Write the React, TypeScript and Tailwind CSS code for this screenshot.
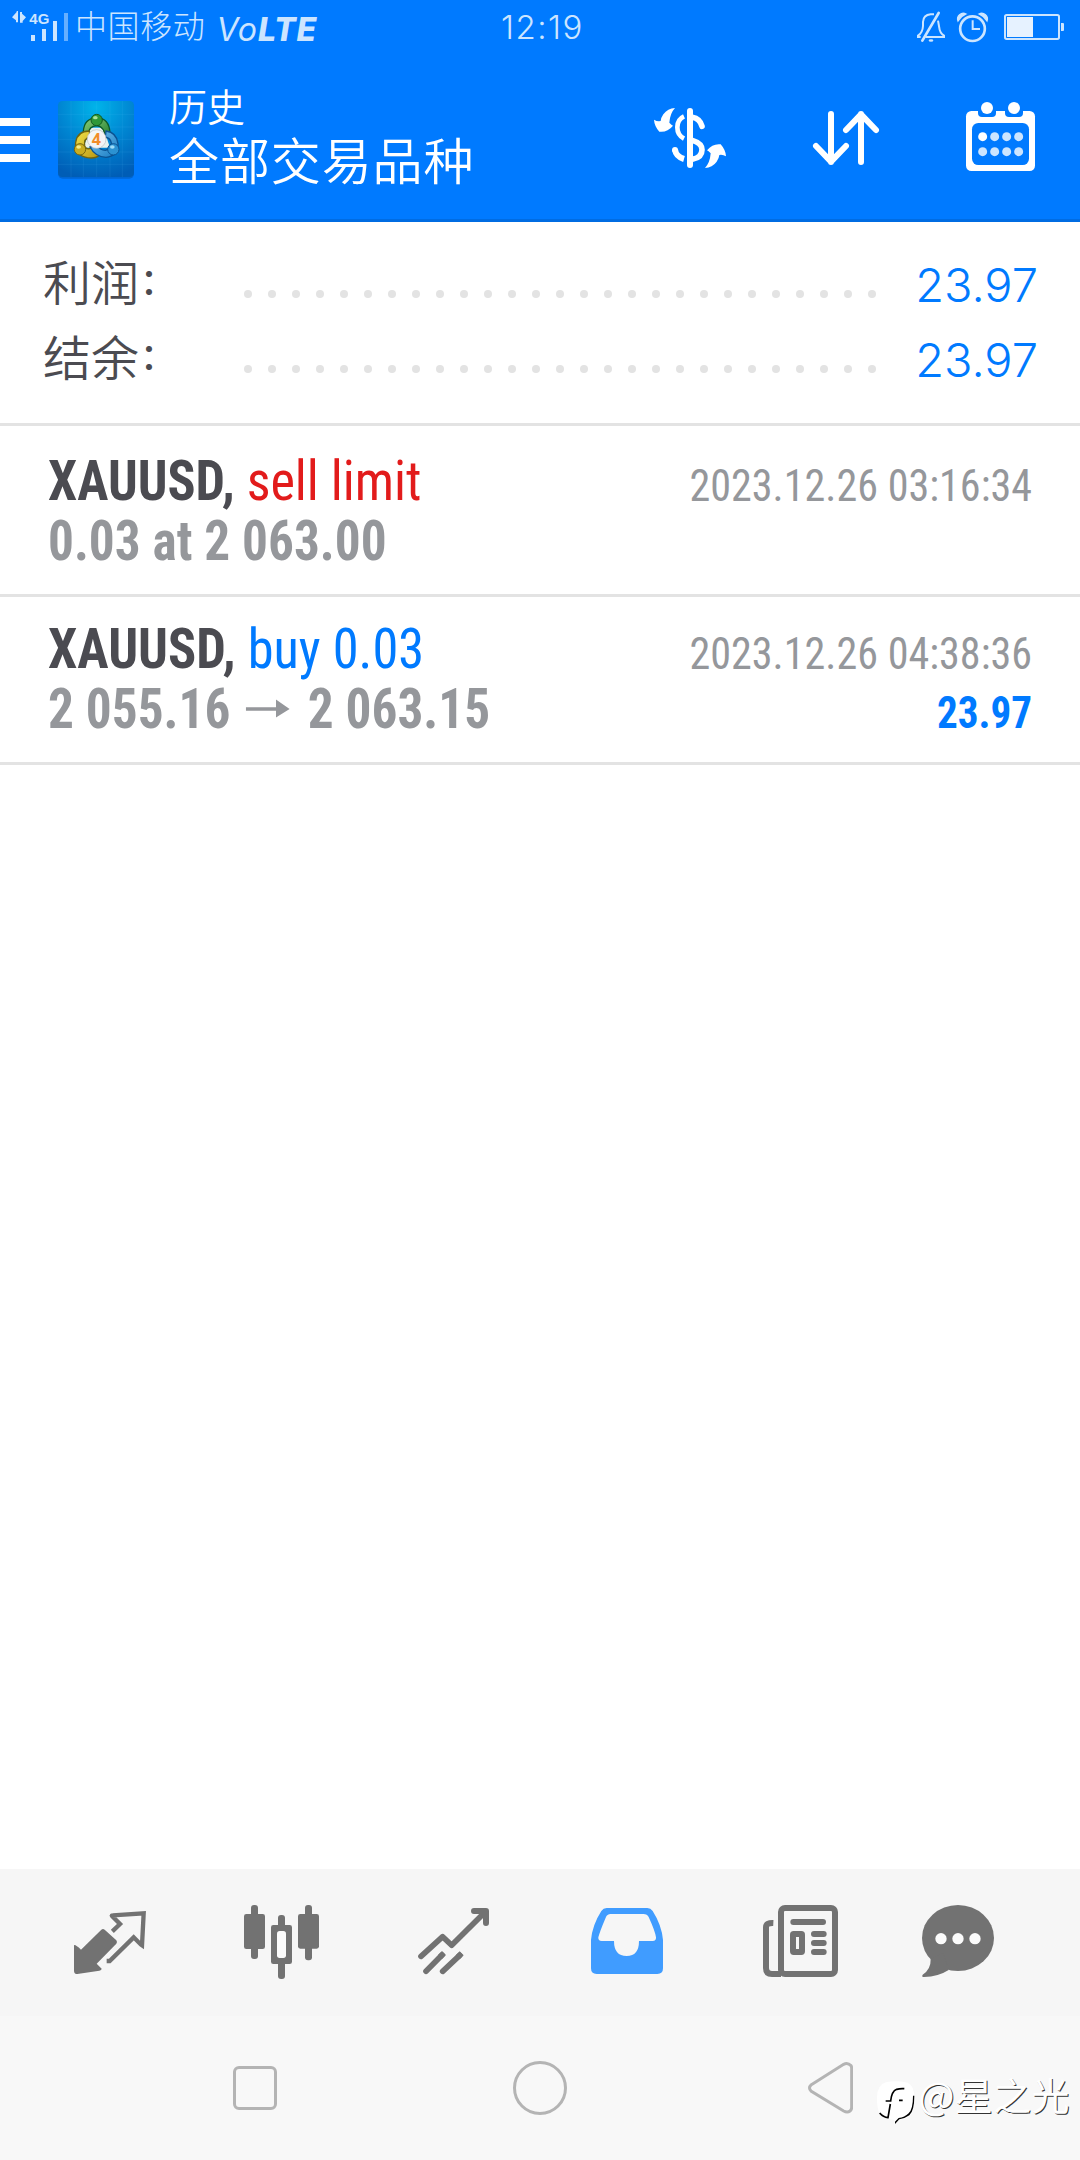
import React from 'react'

function SignalIcon() {
  return (
    <svg className="h-[38px] w-[64px] shrink-0" viewBox="24 24 192 114" fill="#cce5ff">
      <path d="M36 52 L50 36 V33 H54 V67 H48 V61 Z M60 36 H66 V41 L78 52 L68 63 V68 H60 Z" />
      <text x="88" y="72" fontSize="45" fontWeight="700" fontFamily="Liberation Sans, sans-serif" textLength="60">4G</text>
      <rect x="93" y="105" width="12" height="18" />
      <rect x="126" y="87" width="12" height="36" />
      <rect x="159" y="63" width="12" height="60" />
      <rect x="192" y="39" width="12" height="84" fill="#66afff" />
    </svg>
  )
}

function StatusIcons() {
  return (
    <svg className="h-[38px] w-[152px] shrink-0" viewBox="72 24 456 114" fill="none" stroke="#cce5ff">
      <path d="M132 43 H122 Q100 45 99 66 V78 Q98 98 84 107 V111 H92" strokeWidth="6" />
      <path d="M106 111 H162 V107 Q149 98 148 84 L144 62" strokeWidth="6" />
      <path d="M97 122 L146 39" strokeWidth="8" strokeLinecap="round" />
      <ellipse cx="123" cy="121.500" rx="7" ry="4" fill="#cce5ff" stroke="none" />
      <circle cx="247.500" cy="86" r="37" strokeWidth="8" />
      <path d="M248 61 V87 H270" strokeWidth="6" />
      <path d="M204 63 A17 17 0 0 1 228 42 Q212 49 204 63 Z M291 63 A17 17 0 0 0 267 42 Q283 49 291 63 Z" fill="#cce5ff" strokeWidth="4" />
      <rect x="345" y="45" width="162" height="72" rx="5" strokeWidth="6" />
      <rect x="351" y="51" width="78" height="60" fill="#e6f2ff" stroke="none" />
      <path d="M513 69 H519 Q522 69 522 72 V90 Q522 93 519 93 H513 Z" fill="#cce5ff" stroke="none" />
    </svg>
  )
}

function AppLogo() {
  return (
    <svg className="h-[84px] w-[84px] shrink-0" viewBox="162 288 252 252">
      <defs>
        <radialGradient id="tile" cx="0.5" cy="0.08" r="0.95">
          <stop offset="0" stopColor="#00b4ea" />
          <stop offset="0.5" stopColor="#0086d2" />
          <stop offset="1" stopColor="#005db6" />
        </radialGradient>
        <linearGradient id="green" x1="0" y1="0" x2="1" y2="1">
          <stop offset="0" stopColor="#8fd07a" />
          <stop offset="1" stopColor="#1c7a2c" />
        </linearGradient>
        <linearGradient id="gold" x1="0" y1="0" x2="1" y2="1">
          <stop offset="0" stopColor="#f2e34a" />
          <stop offset="1" stopColor="#b99612" />
        </linearGradient>
        <linearGradient id="azure" x1="0" y1="0" x2="1" y2="1">
          <stop offset="0" stopColor="#7cc6ee" />
          <stop offset="1" stopColor="#1479c2" />
        </linearGradient>
      </defs>
      <rect x="174" y="304" width="228" height="229" rx="14" fill="#0059b8" opacity="0.6" />
      <rect x="174" y="300" width="228" height="228" rx="13" fill="url(#tile)" />
      <path d="M213 300 V528 M250 300 V528 M290 300 V528 M330 300 V528 M367 300 V528 M174 340 H402 M174 378 H402 M174 415 H402 M174 453 H402 M174 490 H402" stroke="#5cc8ff" strokeOpacity="0.16" strokeWidth="2" />
      <path d="M272 380 H310 L330 440 H250 Z" fill="#e8f2ee" />
      <path d="M250 392 Q252 352 290 350 Q328 352 330 396 L316 412 Q314 376 290 374 Q266 376 266 398 Z" fill="url(#green)" stroke="#0c5a2a" strokeWidth="4" />
      <path d="M268 390 Q232 390 227 424 Q222 462 262 470 Q288 474 298 462 L284 434 Q262 452 254 436 Q250 412 270 408 Z" fill="url(#gold)" stroke="#6f6410" strokeWidth="4" />
      <path d="M318 390 Q350 394 354 428 Q356 464 318 469 Q286 468 270 438 L290 432 Q300 448 316 448 Q334 444 334 426 Q332 412 316 408 Z" fill="url(#azure)" stroke="#0b5292" strokeWidth="4" />
      <circle cx="290" cy="357" r="17" fill="#2e9838" stroke="#145c22" strokeWidth="3" />
      <circle cx="240" cy="445" r="17" fill="#c9ad20" stroke="#75660f" strokeWidth="3" />
      <circle cx="340" cy="445" r="17" fill="#2b92d2" stroke="#0b5292" strokeWidth="3" />
      <ellipse cx="286" cy="350" rx="7" ry="5" fill="#a9e29b" />
      <ellipse cx="236" cy="438" rx="7" ry="5" fill="#f5ec8a" />
      <ellipse cx="337" cy="438" rx="7" ry="5" fill="#9fdcf8" />
      <circle cx="290" cy="414" r="28" fill="#f3f4f6" stroke="#b9c0c6" strokeWidth="2" />
      <text x="289" y="431" fontSize="48" fontWeight="700" textAnchor="middle" fill="#f28c28" fontFamily="Open Sans, sans-serif">4</text>
    </svg>
  )
}

const swapArrow =
  'M165 84 Q143 85 130 103 Q123 113 122 123 Q112 125 102 119 Q103 138 118 155 Q142 158 159 137 Q155 135 148 128 Q150 100 165 84 Z'

function DollarIcon() {
  return (
    <svg className="h-[96px] w-[100px]" viewBox="60 36 300 288" fill="none" stroke="#fff">
      <path d={swapArrow} fill="#fff" stroke="none" />
      <path d={swapArrow} fill="#fff" stroke="none" transform="rotate(180 210 174)" />
      <path d="M210 93 V255" strokeWidth="18" strokeLinecap="round" />
      <path d="M192 109 Q172 118 172 142 Q172 166 192 176" strokeWidth="14" />
      <path d="M217 112 Q240 116 246 139" strokeWidth="17" strokeLinecap="round" />
      <path d="M217 181 Q246 190 246 209 Q246 232 217 238" strokeWidth="17" />
      <path d="M165 209 Q168 230 192 237" strokeWidth="18" />
      <circle cx="165" cy="210" r="9" fill="#fff" stroke="none" />
    </svg>
  )
}

function SortIcon() {
  return (
    <svg className="h-[96px] w-[90px]" viewBox="540 36 270 288" fill="none" stroke="#fff" strokeWidth="18" strokeLinecap="round" strokeLinejoin="round">
      <path d="M633 102 V246 M588 198 L633 245 L678 198" />
      <path d="M723 246 V102 M678 150 L723 103 L768 150" />
    </svg>
  )
}

function CalendarIcon() {
  return (
    <svg className="h-[96px] w-[100px]" viewBox="990 36 300 288" fill="#fff">
      <rect x="1038" y="93" width="207" height="180" rx="16" />
      <rect x="1056" y="129" width="171" height="126" rx="19" fill="#007aff" />
      <rect x="1074" y="80" width="54" height="31" rx="12" fill="#007aff" />
      <rect x="1155" y="80" width="54" height="31" rx="12" fill="#007aff" />
      <circle cx="1101" cy="84" r="18" />
      <circle cx="1182" cy="84" r="18" />
      {[170, 215].map((y) =>
        [1088, 1124, 1160, 1196].map((x) => (
          <circle key={`${x}-${y}`} cx={x} cy={y} r="13.500" fill={x === 1088 && y === 170 ? '#fff' : '#cce5ff'} />
        )),
      )}
    </svg>
  )
}

function SummaryRow({ label, value }: { label: string; value: string }) {
  return (
    <div className="flex h-[75px] items-center">
      <span className="mb-[10px] flex w-[201px] items-center text-[48px] leading-none whitespace-nowrap text-[#4b4b51] font-['Noto_Sans_CJK_SC',sans-serif] [font-weight:350]">
        {label}
        <span className="-mt-[2px] ml-[1px] text-[36px] font-medium">：</span>
      </span>
      <div className="mt-[18px] flex gap-4">
        {Array.from({ length: 27 }, (_, i) => (
          <span key={i} className="size-2 rounded-full bg-[#e3e3e3]" />
        ))}
      </div>
      <span className="mb-px ml-auto font-['Inter',sans-serif] text-[47px] leading-none font-light text-[#007aff]">{value}</span>
    </div>
  )
}

function PriceArrow() {
  return (
    <svg className="h-[20px] w-[48px]" viewBox="0 0 46 20" preserveAspectRatio="none" fill="#95979b">
      <path d="M0 8.200 H31 V0.500 L45 10 L31 18.500 V11.800 H0 Z" />
    </svg>
  )
}

function TradeIcon() {
  return (
    <svg className="mr-[70px] h-[90px] w-[100px]" viewBox="60 108 300 270" fill="#727272">
      <path d="M102 256 Q105 252 123 269 L184 209 Q189 205 194 209 L229 241 Q233 246 229 251 L170 311 L185 326 Q185 331 178 332 L112 342 Q102 342 102 332 Z" />
      <path d="M217 214 L240 192 L216 168 Q214 166 218 166 L311 160 L306 256 L303 254 L281 232 L209 303 H200" fill="none" stroke="#727272" strokeWidth="13" />
    </svg>
  )
}

function CandlesIcon() {
  return (
    <svg className="mr-[75px] h-[90px] w-[100px]" viewBox="570 108 300 270" fill="#727272">
      <rect x="633" y="135" width="21" height="162" rx="9" />
      <rect x="612" y="162" width="63" height="105" rx="7" />
      <rect x="795" y="135" width="21" height="166" rx="9" />
      <rect x="774" y="162" width="63" height="104" rx="7" />
      <rect x="714" y="165" width="21" height="192" rx="9" />
      <rect x="693" y="195" width="63" height="117" rx="7" />
      <rect x="711" y="213" width="27" height="81" rx="8" fill="#fbfbfb" />
    </svg>
  )
}

function TrendIcon() {
  return (
    <svg className="mr-[75px] h-[90px] w-[100px]" viewBox="1095 108 300 270" fill="none" stroke="#727272" strokeWidth="17" strokeLinecap="round" strokeLinejoin="round">
      <path d="M1143 289 L1208 230 L1235 256 L1336 155" />
      <path d="M1302 153 H1338 V189" strokeWidth="18" />
      <path d="M1158 334 L1206 285 M1208 334 L1259 286" />
      <path d="M1200 291 L1212 279 M1253 292 L1265 280" strokeLinecap="butt" />
    </svg>
  )
}

function InboxIcon() {
  return (
    <svg className="mr-[70px] h-[90px] w-[100px]" viewBox="60 108 300 270" fill="#409cff">
      <path
        fillRule="evenodd"
        d="M93 240 Q97 195 124 153 Q130 144 140 144 H262 Q272 144 278 153 Q305 195 309 240 V325 Q309 342 292 342 H110 Q93 342 93 325 Z M152 162 H250 Q262 162 266 171 Q286 215 288 232 Q289 243 278 243 H237 Q237 288 200 288 Q162 288 162 243 H125 Q114 243 115 232 Q118 218 137 173 Q141 162 152 162 Z"
      />
    </svg>
  )
}

function NewsIcon() {
  return (
    <svg className="mr-[60px] h-[90px] w-[100px]" viewBox="570 108 300 270" fill="none" stroke="#727272" strokeWidth="18">
      <rect x="663" y="144" width="162" height="198" rx="12" />
      <path d="M640 189 Q618 188 618 202 V324 Q618 342 636 342 H663" />
      <rect x="699" y="222" width="27" height="54" rx="2" />
      <path d="M700 186 H789 M762 222 H791 M762 249 H791 M762 276 H791" strokeLinecap="round" />
    </svg>
  )
}

function ChatIcon() {
  return (
    <svg className="h-[90px] w-[100px]" viewBox="1050 108 300 270" fill="#727272">
      <ellipse cx="1194" cy="234" rx="108" ry="99" />
      <path d="M1112 297 Q1113 328 1088 344 Q1084 351 1092 351 Q1135 350 1166 330 L1150 280 Z" />
      <g fill="#fbfbfb">
        <circle cx="1143" cy="236" r="17" />
        <circle cx="1194" cy="236" r="17" />
        <circle cx="1245" cy="236" r="17" />
      </g>
    </svg>
  )
}

function Watermark() {
  return (
    <div className="absolute right-[10px] bottom-[43px] flex items-center gap-[2px]">
      <svg className="h-[46px] w-[40px] translate-y-[9px]" viewBox="290 148 120 138">
        <path d="M320 155 Q350 148 385 156 Q404 164 405 200 Q406 240 392 256 Q378 266 362 267 L346 281 V267 Q316 266 303 252 Q292 236 293 200 Q294 162 320 155 Z" fill="#fff" />
        <path d="M405 195 Q405 240 390 254 Q376 264 360 266 L347 280 V273 L358 262 Q376 260 388 248 Q401 235 401 195 Z" fill="#000" />
        <path d="M301 247 Q312 260 326 261 L333 220 M319 211 H334 Q337 182 352 176 Q362 173 375 174 M359 209 H370" fill="none" stroke="#000" strokeWidth="5" />
      </svg>
      <span className="text-[38px] leading-none tracking-[0.4px] whitespace-nowrap text-white font-['Noto_Sans_CJK_SC',sans-serif] [text-shadow:1px_1px_0_#333]">@星之光</span>
    </div>
  )
}

export default function App() {
  return (
    <div className="flex h-[2160px] w-[1080px] flex-col overflow-hidden bg-white">
      <header className="h-[222px] shrink-0 border-b-[3px] border-[#006ce2] bg-[#007aff] text-white">
        <div className="relative flex h-[61px] items-start pt-[8px] pr-[14px] pl-[8px] text-[#cce5ff]">
          <SignalIcon />
          <span className="ml-[3px] text-[32px] leading-[33px] tracking-[0.6px] font-['Noto_Sans_CJK_SC',sans-serif] font-light">中国移动</span>
          <span className="ml-[11px] font-['Inter',sans-serif] text-[32px] leading-[43px] tracking-[0.9px] italic">
            Vo<span className="font-extrabold">LTE</span>
          </span>
          <span className="absolute left-[501px] font-['Inter',sans-serif] text-[33px] leading-[39px] font-light tracking-[1.5px]">12:19</span>
          <div className="ml-auto"><StatusIcons /></div>
        </div>
        <div className="flex h-[158px] items-center pr-[30px]">
          <div className="flex w-[30px] flex-col gap-[10px]">
            <span className="h-2 bg-white" />
            <span className="h-2 bg-white" />
            <span className="h-2 bg-white" />
          </div>
          <div className="-mt-[3px] ml-[24px]"><AppLogo /></div>
          <div className="mb-[11px] ml-[31px] flex flex-1 flex-col font-['Noto_Sans_CJK_SC',sans-serif] [font-weight:350]">
            <span className="text-[38px] leading-[46px]">历史</span>
            <span className="text-[50px] leading-[60px] tracking-[0.9px]">全部交易品种</span>
          </div>
          <div className="flex gap-[60px]">
            <DollarIcon />
            <SortIcon />
            <CalendarIcon />
          </div>
        </div>
      </header>

      <section className="h-[204px] shrink-0 border-b-[3px] border-[#e3e3e3] pt-[25px] pr-[42px] pl-[43px]">
        <SummaryRow label="利润" value="23.97" />
        <SummaryRow label="结余" value="23.97" />
      </section>

      <main className="flex-1 font-['Roboto',sans-serif] [font-stretch:75%]">
        <article className="flex h-[171px] justify-between border-b-[3px] border-[#e3e3e3] px-[48px] pt-[27px]">
          <div className="text-[55px] whitespace-nowrap">
            <p className="mb-[2px] origin-left scale-x-[0.948] leading-[57px] text-[#e21b1b]"><b className="text-[#4b4b51]">XAUUSD,</b> sell limit</p>
            <p className="origin-left scale-x-[0.933] leading-[58px] font-bold text-[#95979b]">0.03 at 2 063.00</p>
          </div>
          <p className="origin-right scale-x-[0.936] text-[45px] leading-[65px] whitespace-nowrap text-[#95979b]">2023.12.26 03:16:34</p>
        </article>
        <article className="flex h-[168px] justify-between border-b-[3px] border-[#e3e3e3] px-[48px] pt-[24px]">
          <div className="text-[55px] whitespace-nowrap">
            <p className="mb-[2px] origin-left scale-x-[0.953] leading-[57px] text-[#007aff]"><b className="text-[#4b4b51]">XAUUSD,</b> buy 0.03</p>
            <p className="flex origin-left scale-x-[0.933] items-center leading-[58px] font-bold text-[#95979b]">
              2 055.16<span className="mr-[18px] ml-[17px]"><PriceArrow /></span>2 063.15
            </p>
          </div>
          <div className="text-right text-[45px] whitespace-nowrap">
            <p className="origin-right scale-x-[0.936] leading-[65px] text-[#95979b]">2023.12.26 04:38:36</p>
            <p className="origin-right scale-x-[0.915] leading-[53px] font-bold text-[#007aff]">23.97</p>
          </div>
        </article>
      </main>

      <nav className="flex h-[147px] shrink-0 items-start bg-[#f6f6f6] pt-[27px] pl-[60px]">
        <TradeIcon />
        <CandlesIcon />
        <TrendIcon />
        <InboxIcon />
        <NewsIcon />
        <ChatIcon />
      </nav>
      <footer className="relative flex h-[144px] shrink-0 items-center bg-[#f8f8f8] pl-[233px]">
        <span className="size-[44px] rounded-[6px] border-[3px] border-[#b4b4b4]" />
        <span className="ml-[236px] size-[54px] rounded-full border-[3px] border-[#b4b4b4]" />
        <svg className="ml-[241px] h-[52px] w-[45px]" viewBox="84 95 135 156" fill="none" stroke="#b4b4b4" strokeWidth="9">
          <path d="M94 163 L191 102 Q203 96 213 106 Q215 109 215 114 V231 Q215 238 210 242 Q202 248 191 242 L94 183 Q83 173 94 163 Z" />
        </svg>
        <Watermark />
      </footer>
    </div>
  )
}
